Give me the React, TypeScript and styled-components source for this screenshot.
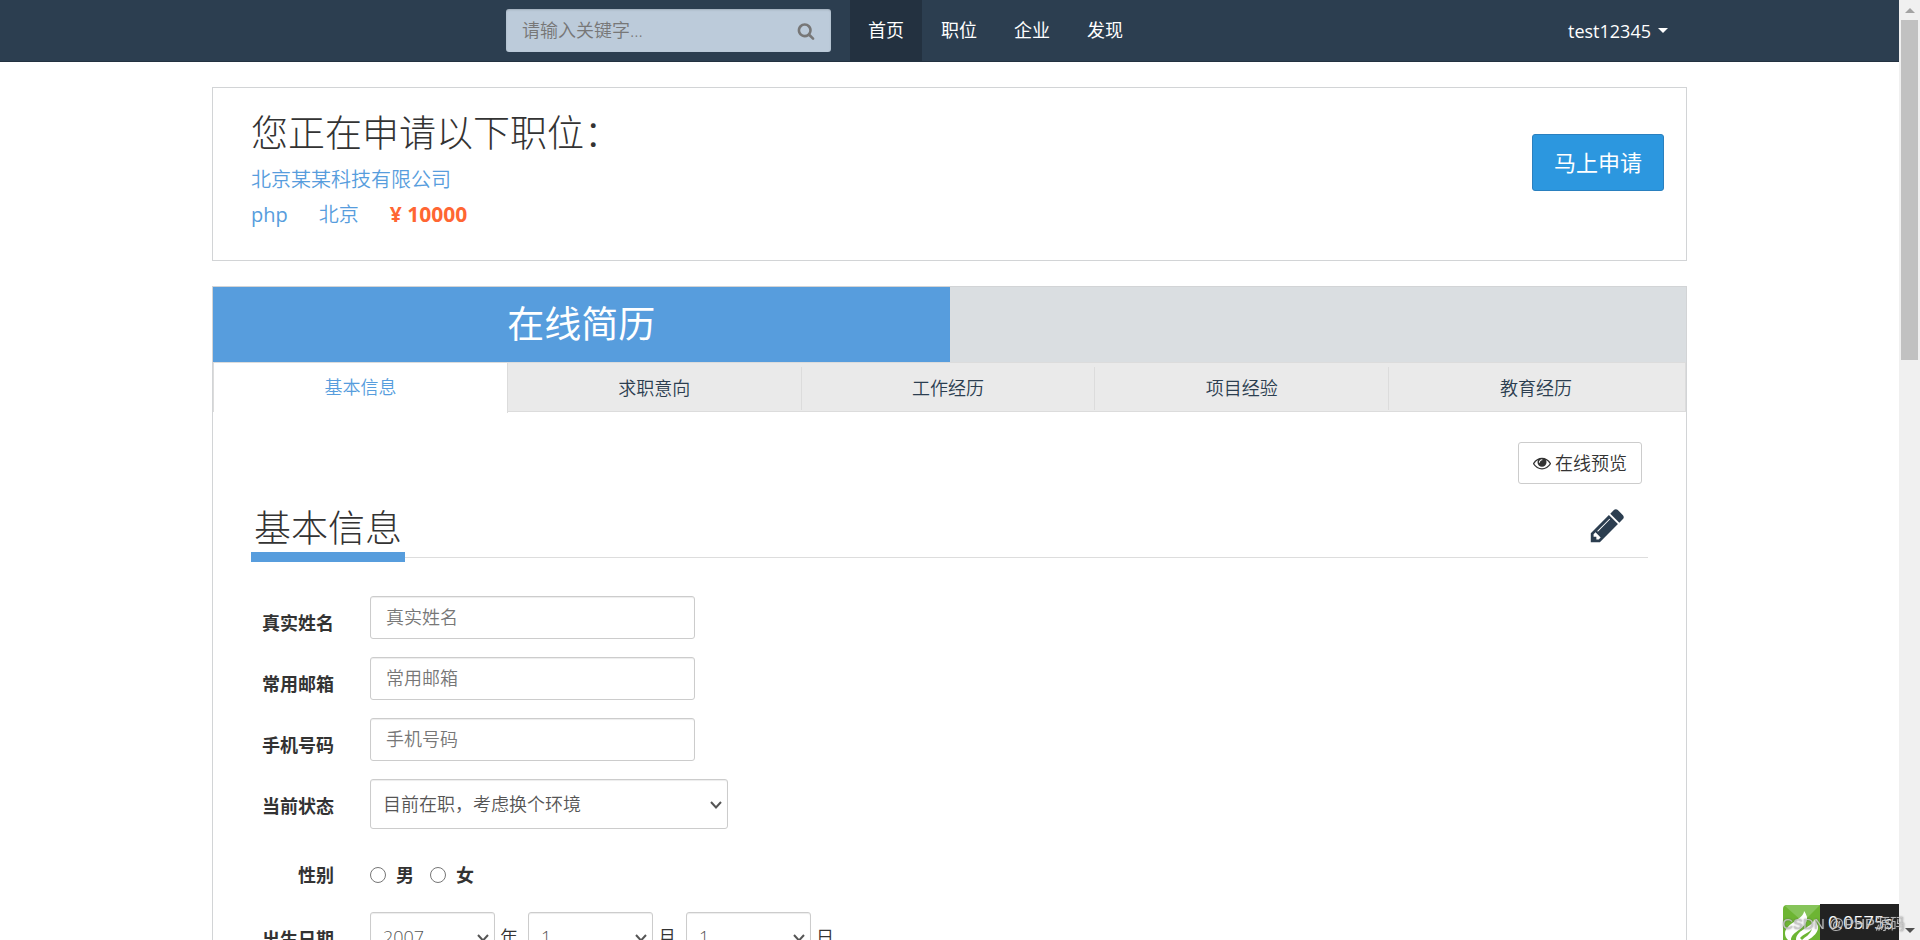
import React from "react";
import styled, { createGlobalStyle } from "styled-components";

const GlobalStyle = createGlobalStyle`
  *, *::before, *::after { box-sizing: border-box; }
  body {
    margin: 0;
    background: #fff;
    color: #333;
    font-family: "Open Sans", "Noto Sans CJK SC", sans-serif;
    font-size: 18px;
    line-height: 26px;
  }
  a { color: inherit; text-decoration: none; }
  input, select, button { font: inherit; }
`;

const Window = styled.div`
  display: flex;
  height: 100vh;
  overflow: hidden;
`;

const Viewport = styled.div`
  flex: 1;
  min-width: 0;
  overflow: hidden;
`;

const Container = styled.div`
  width: 100%;
  max-width: 1475px;
  margin: 0 auto;
`;

/* Top navigation */

const Header = styled.header`
  background: #2c3e50;
  border-bottom: 1px solid #233140;
`;

const HeaderRow = styled(Container)`
  display: flex;
  align-items: center;
  height: 61px;
  padding-left: 294px;
`;

const Search = styled.form`
  display: flex;
  align-items: center;
  width: 325px;
  height: 43px;
  padding: 0 16px;
  margin-right: 19px;
  border-radius: 3px;
  background: #bccbda;
  box-shadow: inset 0 1px 2px rgba(0, 0, 0, 0.15);
`;

const SearchInput = styled.input`
  flex: 1;
  min-width: 0;
  padding: 0 0 2px;
  border: 0;
  outline: 0;
  background: transparent;
  font-weight: 350;
  &::placeholder { color: #777; opacity: 1; }
`;

const IconButton = styled.button<{ $color: string }>`
  display: flex;
  padding: 0;
  border: 0;
  background: none;
  color: ${(p) => p.$color};
  cursor: pointer;
`;

const Nav = styled.nav`
  display: flex;
  align-self: stretch;
  flex: 1;
  gap: 1px;
`;

const NavLink = styled.a<{ $active?: boolean }>`
  display: flex;
  align-items: center;
  padding: 0 18px 2px;
  color: #fff;
  background: ${(p) => (p.$active ? "#233140" : "transparent")};
`;

const UserMenu = styled.button`
  display: flex;
  align-items: center;
  gap: 7px;
  padding: 0 19px;
  border: 0;
  background: none;
  color: #fff;
`;

/* Panels */

const Main = styled(Container).attrs({ as: "main" })`
  display: flex;
  flex-direction: column;
  gap: 25px;
  padding: 25px 0;
`;

const Panel = styled.section`
  border: 1px solid #d2d4d6;
  background: #fff;
`;

const ApplyPanel = styled(Panel)`
  display: flex;
  justify-content: space-between;
  align-items: flex-start;
  padding: 18px 22px 28px 38px;
`;

const Title = styled.h1`
  margin: 0;
  font-size: 37px;
  font-weight: 300;
  line-height: 54px;
`;

const JobLine = styled.div`
  display: flex;
  gap: 31px;
  font-size: 20px;
  font-weight: 350;
  line-height: 35px;
  color: #579ddd;
`;

const JobLines = styled.div`
  padding-top: 2px;
`;

const JobLink = styled.a`
  font-weight: 400;
`;

const Salary = styled.strong`
  font-size: 21px;
  font-weight: 700;
  color: #ff6633;
`;

const ApplyButton = styled.button`
  width: 132px;
  height: 57px;
  margin-top: 28px;
  padding: 0 0 2px;
  border: 1px solid #2a80bf;
  border-radius: 3px;
  background: #2c97df;
  color: #fff;
  font-size: 22px;
`;

/* Resume */

const Steps = styled.div`
  display: grid;
  grid-template-columns: 1fr 1fr;
  height: 75px;
  background: #dadee1;
`;

const Step = styled.h2`
  display: flex;
  align-items: center;
  justify-content: center;
  margin: 0;
  padding-bottom: 2px;
  background: #579ddd;
  color: #fff;
  font-size: 37px;
  font-weight: 400;
`;

const Tabs = styled.nav`
  display: grid;
  grid-template-columns: repeat(5, 1fr);
  height: 50px;
  padding-right: 2px;
  border: 1px solid #dcdcdc;
  background: #eaeaea;
`;

const Tab = styled.a<{ $active?: boolean }>`
  display: flex;
  align-items: center;
  justify-content: center;
  margin: ${(p) => (p.$active ? "0 0 -2px" : "4px 0 1px")};
  padding-bottom: 2px;
  border-right: 1px solid #dcdcdc;
  background: ${(p) => (p.$active ? "#fff" : "transparent")};
  color: ${(p) => (p.$active ? "#579ddd" : "#2c3e50")};
  font-weight: 350;
  &:last-child { border-right: 0; }
`;

const ResumeBody = styled.div`
  padding: 30px 38px;
`;

const Toolbar = styled.div`
  display: flex;
  justify-content: flex-end;
  padding-right: 6px;
`;

const PreviewButton = styled.button`
  display: flex;
  align-items: center;
  justify-content: center;
  gap: 4px;
  width: 124px;
  height: 42px;
  padding: 0 0 1px;
  border: 1px solid #ccc;
  border-radius: 3px;
  background: #fff;
  color: #333;
  font-weight: 350;
`;

const SectionHead = styled.div`
  display: flex;
  align-items: flex-start;
  justify-content: space-between;
  height: 74px;
  margin-bottom: 38px;
  padding: 17px 21px 0 0;
  border-bottom: 1px solid #ddd;
  button { margin-top: 5px; }
`;

const SectionTitle = styled(Title).attrs({ as: "h2" })`
  height: 61px;
  padding: 0 3px;
  border-bottom: 10px solid #579ddd;
`;

const FormRow = styled.div<{ $height: number; $gap: number }>`
  display: grid;
  grid-template-columns: 83px 1fr;
  column-gap: 36px;
  height: ${(p) => p.$height}px;
  margin-bottom: ${(p) => p.$gap}px;
`;

const FieldName = styled.label`
  padding-top: 14px;
  text-align: right;
  font-weight: 700;
`;

const GroupName = styled.span`
  text-align: right;
  font-weight: 700;
`;

const Field = styled.div`
  display: flex;
  align-items: center;
  font-weight: 350;
`;

const TextInput = styled.input`
  width: 325px;
  height: 43px;
  padding: 0 15px 2px;
  border: 1px solid #ccc;
  border-radius: 3px;
  box-shadow: inset 0 1px 1px rgba(0, 0, 0, 0.075);
  font-weight: 350;
  &::placeholder { color: #777; opacity: 1; }
`;

const SelectBox = styled.div<{ $width: number }>`
  position: relative;
  width: ${(p) => p.$width}px;
  svg {
    position: absolute;
    right: 5px;
    top: 22px;
    pointer-events: none;
  }
`;

const NativeSelect = styled.select`
  appearance: none;
  width: 100%;
  height: 50px;
  padding: 0 12px;
  border: 1px solid #ccc;
  border-radius: 3px;
  background: #fff;
  box-shadow: inset 0 1px 1px rgba(0, 0, 0, 0.075);
  color: #555;
  font-weight: 350;
`;

const Unit = styled.span`
  width: 33px;
  padding-left: 5px;
`;

const RadioLabel = styled.label`
  display: flex;
  align-items: center;
  gap: 10px;
  margin-right: 16px;
  font-weight: 700;
  input {
    width: 16px;
    height: 16px;
    margin: 0;
  }
`;

/* Browser scrollbar */

const Scrollbar = styled.div`
  display: flex;
  flex-direction: column;
  align-items: center;
  width: 21px;
  background: #f0f0f0;
`;

const ScrollArrow = styled.span<{ $down?: boolean }>`
  display: flex;
  align-items: center;
  justify-content: center;
  height: 20px;
  color: ${(p) => (p.$down ? "#505050" : "#a3a3a3")};
`;

const ScrollThumb = styled.div`
  width: 17px;
  height: 340px;
  background: #c1c1c1;
`;

const Fill = styled.div`
  flex: 1;
`;

/* Page trace badge and watermark */

const Trace = styled.div`
  position: fixed;
  right: 21px;
  bottom: 0;
  display: flex;
  align-items: flex-end;
  height: 36px;
`;

const TraceTime = styled.div`
  width: 79px;
  height: 36px;
  padding-left: 8px;
  background: #222;
  color: #fff;
  line-height: 36px;
`;

const Watermark = styled.div`
  position: fixed;
  right: 15px;
  bottom: 6px;
  color: rgba(205, 205, 205, 0.85);
  font-family: "Liberation Sans", "Noto Sans CJK SC", sans-serif;
  font-size: 15px;
  line-height: 20px;
  text-shadow: 0 0 2px rgba(80, 80, 80, 0.8);
`;

const FaIcon = ({ d, size }: { d: string; size: number }) => (
  <svg width={size} height={size} viewBox="0 0 1792 1792" fill="currentColor" aria-hidden="true">
    <path d={d} />
  </svg>
);

const SEARCH =
  "M1216 832q0-185-131.5-316.5t-316.5-131.5-316.5 131.5-131.5 316.5 131.5 316.5 316.5 131.5 316.5-131.5 131.5-316.5zm512 832q0 52-38 90t-90 38q-54 0-90-38l-343-342q-179 124-399 124-143 0-273.5-55.5t-225-150-150-225-55.5-273.5 55.5-273.5 150-225 225-150 273.5-55.5 273.5 55.5 225 150 150 225 55.5 273.5q0 220-124 399l343 343q37 37 37 90z";
const EYE =
  "M1664 960q-152-236-381-353 61 104 61 225 0 185-131.5 316.5t-316.5 131.5-316.5-131.5-131.5-316.5q0-121 61-225-229 117-381 353 133 205 333.5 326.5t434.5 121.5 434.5-121.5 333.5-326.5zm-720-384q0-20-14-34t-34-14q-125 0-214.5 89.5t-89.5 214.5q0 20 14 34t34 14 34-14 14-34q0-86 61-147t147-61q20 0 34-14t14-34zm848 384q0 34-20 69-140 230-376.5 368.5t-499.5 138.5-499.5-139-376.5-368q-20-35-20-69t20-69q140-229 376.5-368t499.5-139 499.5 139 376.5 368q20 35 20 69z";
const PENCIL =
  "M491 1536l91-91-235-235-91 91v107h128v128h107zm523-928q0-22-22-22-10 0-17 7l-542 542q-7 7-7 17 0 22 22 22 10 0 17-7l542-542q7-7 7-17zm-54-192l416 416-832 832h-416v-416zm683 96q0 53-37 90l-166 166-416-416 166-165q36-38 90-38 53 0 91 38l235 234q37 39 37 91z";

const Triangle = ({ down }: { down?: boolean }) => (
  <svg width="10" height="5" viewBox="0 0 10 5" fill="currentColor" aria-hidden="true">
    <path d={down ? "M0 0h10L5 5z" : "M0 5h10L5 0z"} />
  </svg>
);

const TraceLogo = () => (
  <svg width="37" height="35" viewBox="0 0 37 35" aria-hidden="true">
    <path d="M4 0H37V35H0V4Q0 0 4 0z" fill="#6db533" />
    <path d="M4 0H37L20 17L2 1z" fill="#86c45a" />
    <path d="M21 6C21 14 3 18 2 28C2 31 3 33 5 35H8C8 26 25 24 24 12C23 9 22 7 21 6z" fill="#fff" />
    <path d="M31 14C31 22 13 24 13 35H25C30 32 36 27 35 21C34 18 32 16 31 14z" fill="#fff" />
    <path d="M17 33C20 29 26 28 29 24C27 30 22 32 19 35z" fill="#6db533" />
  </svg>
);

type SelectProps = { id: string; width: number; options: string[]; label?: string };

const Select = ({ id, width, options, label }: SelectProps) => (
  <SelectBox $width={width}>
    <NativeSelect id={id} aria-label={label}>
      {options.map((o) => (
        <option key={o}>{o}</option>
      ))}
    </NativeSelect>
    <svg width="14" height="9" viewBox="0 0 14 9" fill="none" stroke="#555" strokeWidth="2" aria-hidden="true">
      <path d="M2 1L7 6.500L12 1" />
    </svg>
  </SelectBox>
);

const navItems = ["首页", "职位", "企业", "发现"];
const tabItems = ["基本信息", "求职意向", "工作经历", "项目经验", "教育经历"];
const textFields = [
  { id: "name", label: "真实姓名" },
  { id: "email", label: "常用邮箱" },
  { id: "mobile", label: "手机号码" },
];

export default function App() {
  return (
    <>
      <GlobalStyle />
      <Window>
        <Viewport>
          <Header>
            <HeaderRow>
              <Search>
                <SearchInput type="text" placeholder="请输入关键字..." aria-label="关键字" />
                <IconButton type="button" $color="#777" aria-label="搜索">
                  <FaIcon d={SEARCH} size={18} />
                </IconButton>
              </Search>
              <Nav>
                {navItems.map((item, i) => (
                  <NavLink key={item} href="#" $active={i === 0}>
                    {item}
                  </NavLink>
                ))}
              </Nav>
              <UserMenu type="button">
                test12345
                <Triangle down />
              </UserMenu>
            </HeaderRow>
          </Header>

          <Main>
            <ApplyPanel>
              <div>
                <Title>您正在申请以下职位：</Title>
                <JobLines>
                  <JobLine>
                    <a href="#">北京某某科技有限公司</a>
                  </JobLine>
                  <JobLine>
                    <JobLink href="#">php</JobLink>
                    <span>北京</span>
                    <Salary>¥ 10000</Salary>
                  </JobLine>
                </JobLines>
              </div>
              <ApplyButton type="button">马上申请</ApplyButton>
            </ApplyPanel>

            <Panel>
              <Steps>
                <Step>在线简历</Step>
              </Steps>
              <Tabs>
                {tabItems.map((item, i) => (
                  <Tab key={item} href="#" $active={i === 0}>
                    {item}
                  </Tab>
                ))}
              </Tabs>
              <ResumeBody>
                <Toolbar>
                  <PreviewButton type="button">
                    <FaIcon d={EYE} size={18} />
                    在线预览
                  </PreviewButton>
                </Toolbar>
                <SectionHead>
                  <SectionTitle>基本信息</SectionTitle>
                  <IconButton type="button" $color="#2c3e50" aria-label="编辑">
                    <FaIcon d={PENCIL} size={39} />
                  </IconButton>
                </SectionHead>

                {textFields.map((f) => (
                  <FormRow key={f.id} $height={43} $gap={18}>
                    <FieldName htmlFor={f.id}>{f.label}</FieldName>
                    <Field>
                      <TextInput id={f.id} type="text" placeholder={f.label} />
                    </Field>
                  </FormRow>
                ))}
                <FormRow $height={50} $gap={33}>
                  <FieldName htmlFor="status">当前状态</FieldName>
                  <Field>
                    <Select id="status" width={358} options={["目前在职，考虑换个环境"]} />
                  </Field>
                </FormRow>
                <FormRow $height={26} $gap={24}>
                  <GroupName id="gender">性别</GroupName>
                  <Field role="radiogroup" aria-labelledby="gender">
                    <RadioLabel>
                      <input type="radio" name="gender" value="male" />男
                    </RadioLabel>
                    <RadioLabel>
                      <input type="radio" name="gender" value="female" />女
                    </RadioLabel>
                  </Field>
                </FormRow>
                <FormRow $height={50} $gap={18}>
                  <FieldName htmlFor="year">出生日期</FieldName>
                  <Field>
                    <Select id="year" width={125} options={["2007"]} />
                    <Unit>年</Unit>
                    <Select id="month" width={125} options={["1"]} label="月" />
                    <Unit>月</Unit>
                    <Select id="day" width={125} options={["1"]} label="日" />
                    <Unit>日</Unit>
                  </Field>
                </FormRow>
              </ResumeBody>
            </Panel>
          </Main>
        </Viewport>

        <Scrollbar aria-hidden="true">
          <ScrollArrow>
            <Triangle />
          </ScrollArrow>
          <ScrollThumb />
          <Fill />
          <ScrollArrow $down>
            <Triangle down />
          </ScrollArrow>
        </Scrollbar>
      </Window>

      <Trace>
        <TraceLogo />
        <TraceTime>0.0575s</TraceTime>
      </Trace>
      <Watermark>CSDN @PHP源码</Watermark>
    </>
  );
}
